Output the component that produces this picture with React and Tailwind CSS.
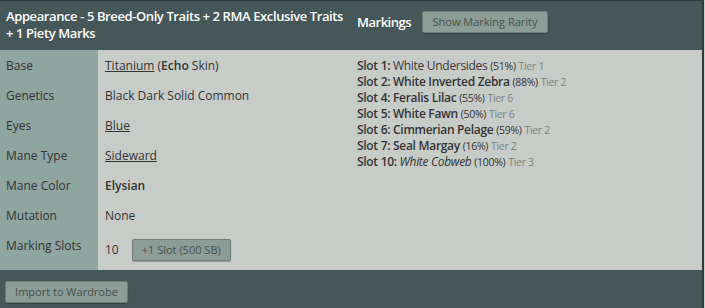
import React from 'react';

const traits = [
  { label: 'Base', value: (<span><a className="underline">Titanium</a> (<b className="font-semibold">Echo</b> Skin)</span>) },
  { label: 'Genetics', value: <span>Black Dark Solid Common</span> },
  { label: 'Eyes', value: <a className="underline">Blue</a> },
  { label: 'Mane Type', value: <a className="underline">Sideward</a> },
  { label: 'Mane Color', value: <span className="font-semibold">Elysian</span> },
  { label: 'Mutation', value: <span>None</span> },
];

const markings = [
  { slot: 1, name: 'White Undersides', pct: '51%', tier: 1, style: 'font-normal text-[#3d3340]' },
  { slot: 2, name: 'White Inverted Zebra', pct: '88%', tier: 2, style: 'font-semibold' },
  { slot: 4, name: 'Feralis Lilac', pct: '55%', tier: 6, style: 'font-semibold' },
  { slot: 5, name: 'White Fawn', pct: '50%', tier: 6, style: 'font-semibold' },
  { slot: 6, name: 'Cimmerian Pelage', pct: '59%', tier: 2, style: 'font-semibold' },
  { slot: 7, name: 'Seal Margay', pct: '16%', tier: 2, style: 'font-semibold' },
  { slot: 10, name: 'White Cobweb', pct: '100%', tier: 3, style: 'font-normal italic' },
];

const GreyButton = ({ children, className = '' }) => (
  <button
    className={`h-[22px] bg-[#8d9c97] border border-[#6f7d79] rounded-[2px] text-[11px] text-[#46524f] shadow-[0_1px_1px_rgba(0,0,0,0.25)] ${className}`}
  >
    {children}
  </button>
);

export default function App() {
  return (
    <div className="w-[705px] h-[308px] bg-[#c8ceca] font-['Open_Sans',sans-serif]">
      <div className="w-[704px] h-[308px] bg-[#455759] border-t border-r-2 border-[#2e3a3c] flex flex-col">
        <div className="flex h-[49px]">
          <div className="w-[350px] pl-[6px] pt-[7px]">
            <div className="w-[340px] text-[13px] leading-[17px] font-semibold text-white tracking-[-0.4px]">
              Appearance - 5 Breed-Only Traits + 2 RMA Exclusive Traits + 1 Piety Marks
            </div>
          </div>
          <div className="flex-1 pl-[7px] pt-[10px] flex items-start gap-[11px]">
            <span className="text-[13px] font-semibold text-white leading-[22px] tracking-[-0.5px]">Markings</span>
            <GreyButton className="w-[126px]">Show Marking Rarity</GreyButton>
          </div>
        </div>

        <div className="flex h-[220px] bg-[#c7ccc8] text-[12px] text-[#333]">
          <div className="w-[98px] bg-[#8fa5a0] pt-[1px]">
            {[...traits.map((t) => t.label), 'Marking Slots'].map((l) => (
              <div key={l} className="h-[30px] flex items-center pl-[6px]">{l}</div>
            ))}
          </div>
          <div className="w-[252px] pt-[1px]">
            {traits.map((t) => (
              <div key={t.label} className="h-[30px] flex items-center pl-[7px]">{t.value}</div>
            ))}
            <div className="h-[38px] flex items-center pl-[7px] gap-[13px]">
              <span className="text-[#3a2f3c]">10</span>
              <GreyButton className="w-[99px]">+1 Slot (500 SB)</GreyButton>
            </div>
          </div>
          <div className="flex-1 pl-[7px] pt-[8px] tracking-[-0.3px]">
            {markings.map((m) => (
              <div key={m.slot} className="leading-[16px]">
                <span className="font-semibold">Slot {m.slot}:</span>{' '}
                <span className={m.style}>{m.name}</span>{' '}
                <span className="text-[10.5px]">({m.pct})</span>{' '}
                <span className="text-[10.5px] text-[#7c8380]">Tier {m.tier}</span>
              </div>
            ))}
          </div>
        </div>

        <div className="pl-[5px] pt-[8px]">
          <GreyButton className="w-[123px]">Import to Wardrobe</GreyButton>
        </div>
      </div>
    </div>
  );
}
